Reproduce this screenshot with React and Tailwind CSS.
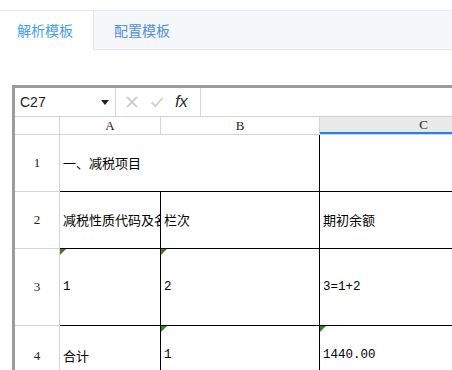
import React from 'react';

const cjk = "font-['SimSun','Noto_Sans_CJK_SC',sans-serif]";

const Flag = () => (
    <span className="absolute left-0 top-0 w-0 h-0 border-t-[6px] border-r-[6px] border-t-[#3f7f1f] border-r-transparent" />
);

const HeadCell = ({ w, label, active }) => (
    <div
        className={`${w} h-full flex items-center justify-center border-r border-[#d4d4d4] font-['Liberation_Serif',serif] text-[13px] text-[#222] ${
            active ? 'bg-[#e9e9e9] border-b-2 border-b-[#1b87e6]' : ''
        }`}
    >
        {label}
    </div>
);

const RowHead = ({ n }) => (
    <div className="w-[45px] shrink-0 h-full flex items-center justify-center border-r border-[#d4d4d4] font-['Liberation_Serif',serif] text-[13px] text-[#222]">
        {n}
    </div>
);

const Cell = ({ w, children, flag, right = true, mono, clip }) => (
    <div
        className={`${w} shrink-0 h-full relative flex items-center pl-[3px] ${right ? 'border-r border-black' : ''} ${
            mono ? "font-['Liberation_Mono',monospace] text-[12.5px]" : `${cjk} text-[13px]`
        } ${clip ? 'overflow-hidden whitespace-nowrap' : ''} text-black`}
    >
        {flag && <Flag />}
        {children}
    </div>
);

const App = () => {
    return (
        <div className="w-[452px] h-[370px] overflow-hidden bg-white font-['Noto_Sans_CJK_SC',sans-serif]">
            {/* tabs */}
            <div className="mt-[10px] h-[40px] flex border-t border-[#e4e7ed]">
                <div className="w-[94px] h-full flex items-center pl-[17px] bg-white border-r border-[#e4e7ed] text-[14px] text-[#409eff]">
                    解析模板
                </div>
                <div className="flex-1 h-full flex items-center pl-[20px] bg-[#f5f7fa] border-b border-[#e4e7ed] text-[14px] text-[#4d8fe8]">
                    配置模板
                </div>
            </div>

            {/* sheet */}
            <div className="mt-[35px] ml-[12px] w-[700px] border-l-[3px] border-t-[3px] border-[#9c9c9c]">
                {/* formula bar */}
                <div className="h-[29px] flex border-b border-[#d4d4d4]">
                    <div className="w-[101px] h-full flex items-center justify-between pl-[5px] pr-[6px] border-r border-[#d4d4d4] font-['Liberation_Sans',sans-serif] text-[14px] text-[#222]">
                        <span>C27</span>
                        <span className="w-0 h-0 border-l-[4px] border-r-[4px] border-t-[5px] border-l-transparent border-r-transparent border-t-[#222]" />
                    </div>
                    <div className="w-[85px] h-full flex items-center gap-[11px] pl-[9px] border-r border-[#d4d4d4]">
                        <svg width="14" height="14" viewBox="0 0 14 14">
                            <path d="M2 2 L12 12 M12 2 L2 12" stroke="#cfcfcf" strokeWidth="2" />
                        </svg>
                        <svg width="14" height="14" viewBox="0 0 14 14">
                            <path d="M1.5 7.5 L5.5 11 L12.5 3" stroke="#cfcfcf" strokeWidth="1.8" fill="none" />
                        </svg>
                        <span className="italic font-['Liberation_Sans',sans-serif] text-[17px] text-[#333] tracking-[-0.5px]">fx</span>
                    </div>
                    <div className="flex-1" />
                </div>

                {/* column headers */}
                <div className="h-[18px] flex border-b border-[#d4d4d4]">
                    <div className="w-[45px] shrink-0 h-full border-r border-[#d4d4d4]" />
                    <HeadCell w="w-[101px] shrink-0" label="A" />
                    <HeadCell w="w-[159px] shrink-0" label="B" />
                    <HeadCell w="w-[208px] shrink-0" label="C" active />
                </div>

                {/* row 1 */}
                <div className="h-[57px] flex">
                    <div className="h-full flex border-b border-[#d4d4d4]">
                        <RowHead n="1" />
                    </div>
                    <div className="flex border-b border-black h-full">
                        <Cell w="w-[260px]">一、减税项目</Cell>
                        <Cell w="w-[208px]" right={false} />
                    </div>
                </div>

                {/* row 2 */}
                <div className="h-[57px] flex">
                    <div className="h-full flex border-b border-[#d4d4d4]">
                        <RowHead n="2" />
                    </div>
                    <div className="flex border-b border-black h-full">
                        <Cell w="w-[101px]" clip>减税性质代码及名称</Cell>
                        <Cell w="w-[159px]">栏次</Cell>
                        <Cell w="w-[208px]" right={false}>期初余额</Cell>
                    </div>
                </div>

                {/* row 3 */}
                <div className="h-[77px] flex">
                    <div className="h-full flex border-b border-[#d4d4d4]">
                        <RowHead n="3" />
                    </div>
                    <div className="flex border-b border-black h-full">
                        <Cell w="w-[101px]" mono flag>1</Cell>
                        <Cell w="w-[159px]" mono flag>2</Cell>
                        <Cell w="w-[208px]" mono right={false}>3=1+2</Cell>
                    </div>
                </div>

                {/* row 4 */}
                <div className="h-[59px] flex">
                    <RowHead n="4" />
                    <Cell w="w-[101px]">合计</Cell>
                    <Cell w="w-[159px]" mono flag>1</Cell>
                    <Cell w="w-[208px]" mono flag right={false}>1440.00</Cell>
                </div>
            </div>
        </div>
    );
};

export default App;
